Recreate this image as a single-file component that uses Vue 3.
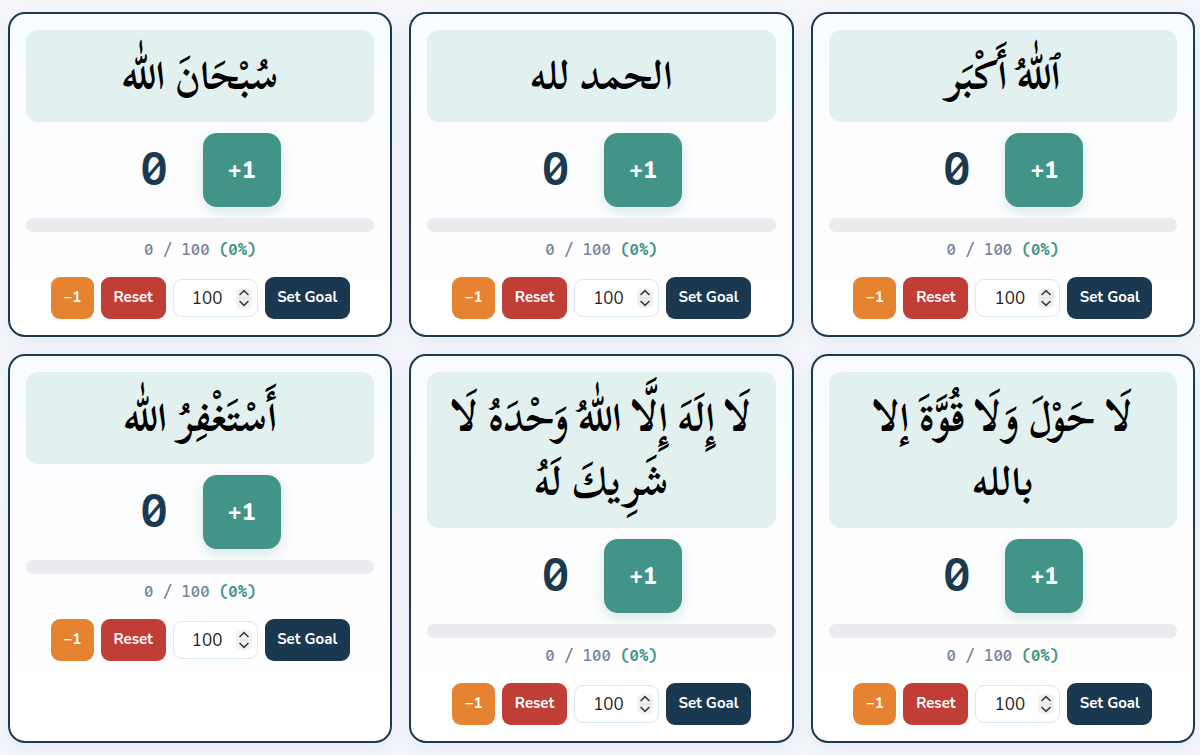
<script setup>
import { reactive } from 'vue'

const cards = reactive([
  { text: 'سُبْحَانَ اللّٰه', count: 0, goal: 100, draft: 100 },
  { text: 'الحمد لله', count: 0, goal: 100, draft: 100 },
  { text: 'ٱللّٰهُ أَكْبَر', count: 0, goal: 100, draft: 100 },
  { text: 'أَسْتَغْفِرُ اللّٰه', count: 0, goal: 100, draft: 100 },
  { text: 'لَا إِلَهَ إِلَّا اللّٰهُ وَحْدَهُ لَا شَرِيكَ لَهُ', count: 0, goal: 100, draft: 100 },
  { text: 'لَا حَوْلَ وَلَا قُوَّةَ إلا بالله', count: 0, goal: 100, draft: 100 },
])

const percent = (card) => Math.min(100, Math.round((card.count / card.goal) * 100))
const decrement = (card) => { card.count = Math.max(0, card.count - 1) }
const setGoal = (card) => { card.goal = Math.max(1, Number(card.draft) || 1) }
</script>

<template>
  <main class="grid">
    <article v-for="(card, i) in cards" :key="i" class="card">
      <h2 class="phrase" lang="ar" dir="rtl">{{ card.text }}</h2>
      <div class="tally">
        <output class="count">{{ card.count }}</output>
        <button class="plus" type="button" @click="card.count++">+1</button>
      </div>
      <div class="track"><div class="fill" :style="{ width: percent(card) + '%' }"></div></div>
      <p class="progress">{{ card.count }} / {{ card.goal }} <span class="pct">({{ percent(card) }}%)</span></p>
      <div class="controls">
        <button class="btn minus" type="button" @click="decrement(card)">−1</button>
        <button class="btn reset" type="button" @click="card.count = 0">Reset</button>
        <div class="goal">
          <input v-model="card.draft" class="goal-input" type="number" min="1" aria-label="Goal" />
          <svg class="spinner" viewBox="0 0 16 20" aria-hidden="true">
            <rect width="16" height="20" rx="5" fill="#f1f1f1" />
            <path d="M1 10H15" stroke="#dedede" />
            <path d="M3.5 7L8 2.7L12.5 7M3.5 13L8 17.3L12.5 13" fill="none" stroke="#3c3c3c" stroke-width="1.6" />
          </svg>
        </div>
        <button class="btn set" type="button" @click="setGoal(card)">Set Goal</button>
      </div>
    </article>
  </main>
</template>

<style>
body {
  margin: 0;
  background: #f5f7fc;
}
</style>

<style scoped>
.grid {
  display: grid;
  grid-template-columns: repeat(3, minmax(0, 1fr));
  gap: 17px;
  padding: 12px 5px 12px 8px;
  font-family: Nunito, Lato, "Noto Sans", sans-serif;
}
.card {
  display: flex;
  flex-direction: column;
  padding: 16px;
  border: 2px solid #1a3a52;
  border-radius: 17px;
  background: linear-gradient(180deg, #f8fcff 0%, #fdfdff 40%, #ffffff 100%);
  box-shadow: 0 6px 24px rgba(26, 58, 82, 0.07);
}
.phrase {
  margin: 0 0 11px;
  padding: 14px;
  border-radius: 12px;
  background: #e2f1f0;
  color: #000;
  font-family: "Scheherazade New", "Noto Naskh Arabic", "DejaVu Sans", serif;
  font-size: 40px;
  font-weight: 700;
  line-height: 64px;
  text-align: center;
}
.tally {
  display: flex;
  align-items: center;
  justify-content: center;
  gap: 14px;
}
.count {
  min-width: 69px;
  padding-bottom: 4px;
  color: #1a3a52;
  font-family: "Cascadia Code", "Noto Sans", sans-serif;
  font-feature-settings: "zero";
  font-size: 48px;
  font-weight: 600;
  line-height: 64px;
  text-align: center;
}
.plus {
  width: 78px;
  height: 74px;
  padding: 0;
  border: 0;
  border-radius: 14px;
  background: #429488;
  box-shadow: 0 5px 14px rgba(66, 148, 136, 0.22);
  color: #fff;
  font-family: inherit;
  font-size: 23px;
  font-weight: 800;
}
.track {
  height: 14px;
  margin-top: 11px;
  overflow: hidden;
  border-radius: 7px;
  background: #eaebef;
}
.fill {
  height: 100%;
  background: #429488;
}
.progress {
  margin: 6px 0 15px;
  color: #74839a;
  font-family: "Cascadia Code", "DejaVu Sans Mono", monospace;
  font-feature-settings: "zero";
  font-size: 16px;
  font-weight: 500;
  line-height: 24px;
  text-align: center;
}
.pct {
  color: #429488;
  font-weight: 600;
}
.controls {
  display: flex;
  align-items: center;
  justify-content: center;
  gap: 7px;
}
.btn {
  height: 42px;
  padding: 0 12px 2px;
  border: 0;
  border-radius: 9px;
  color: #fff;
  font-family: inherit;
  font-size: 15px;
  font-weight: 700;
}
.minus {
  min-width: 43px;
  background: #e58331;
}
.reset {
  min-width: 65px;
  background: #c13e37;
}
.set {
  min-width: 85px;
  background: #1a3850;
}
.goal {
  position: relative;
}
.goal-input {
  display: block;
  box-sizing: border-box;
  width: 85px;
  height: 38px;
  padding: 0 22px 0 6px;
  border: 1px solid #d8e8f4;
  border-radius: 9px;
  background: #fff;
  color: #1c1c1c;
  font-family: inherit;
  font-size: 17px;
  text-align: center;
  appearance: textfield;
}
.goal-input::-webkit-inner-spin-button {
  appearance: none;
  margin: 0;
}
.spinner {
  position: absolute;
  top: 9px;
  right: 6px;
  width: 16px;
  height: 20px;
  pointer-events: none;
}
</style>
